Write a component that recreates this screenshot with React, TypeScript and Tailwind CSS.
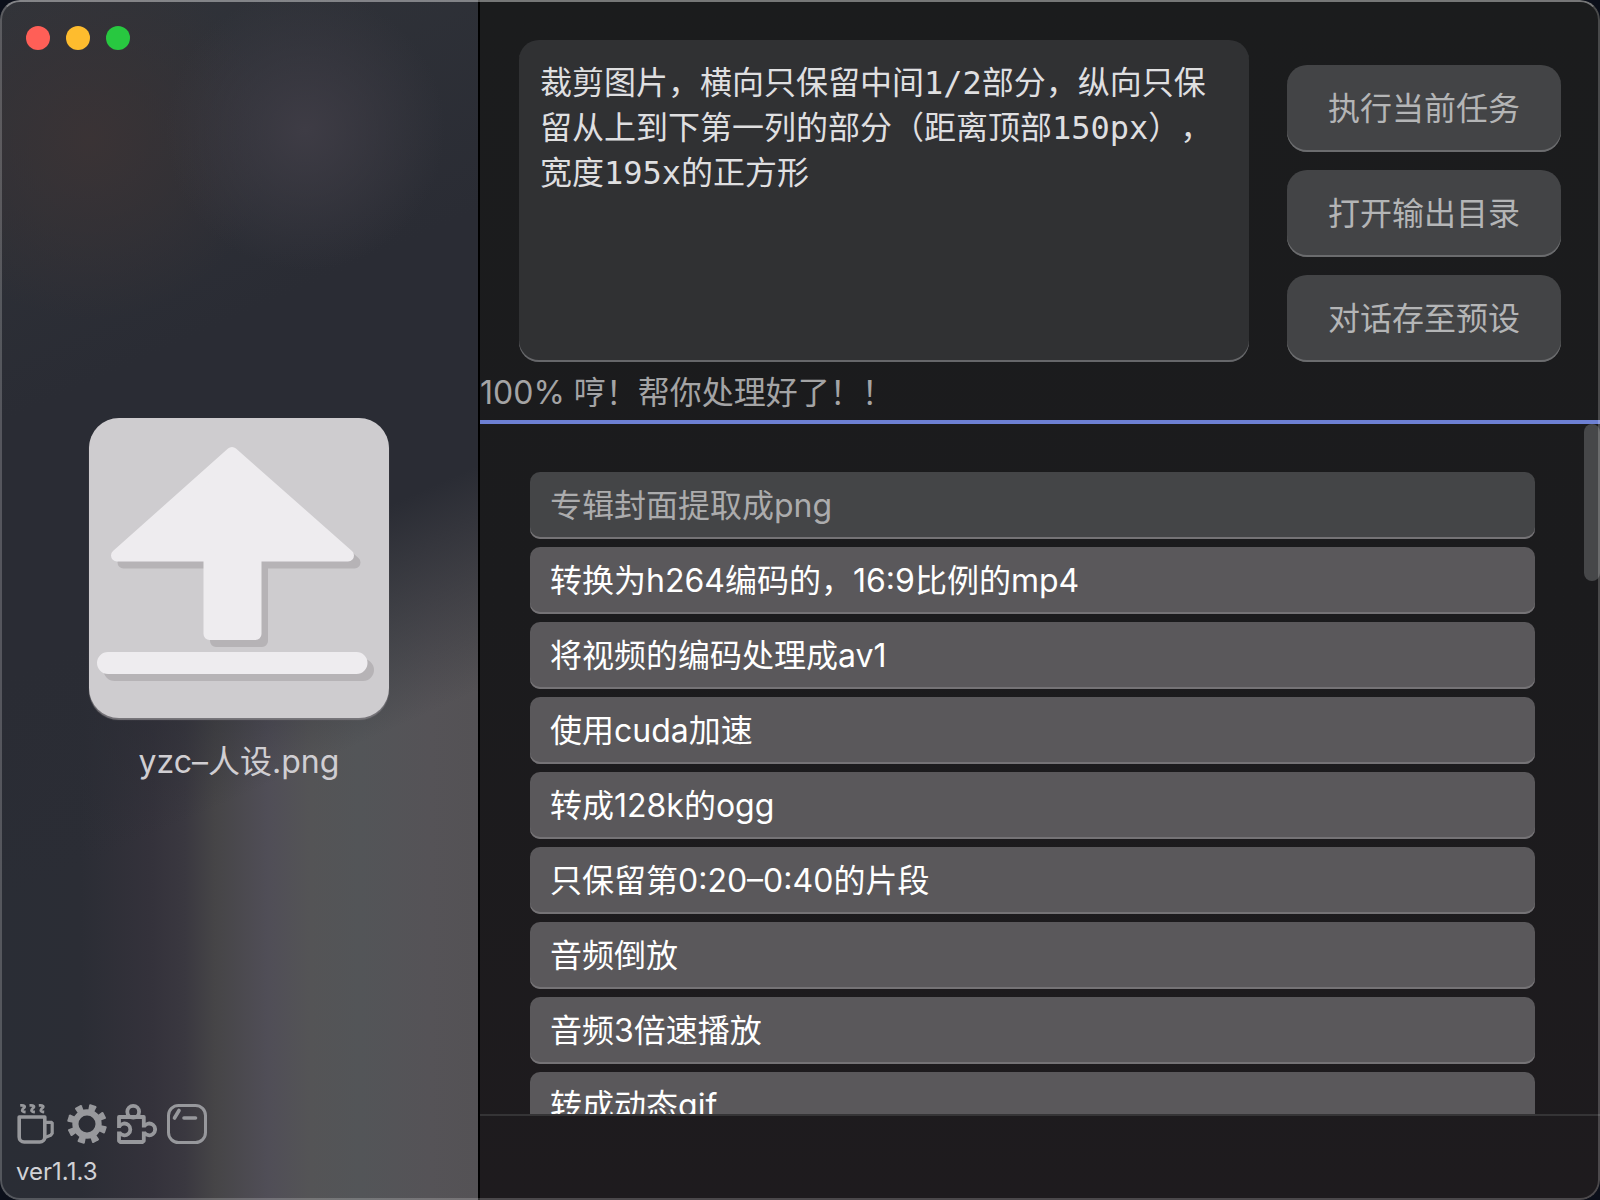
import { useState } from 'react';

const PRESETS = [
  '专辑封面提取成png',
  '转换为h264编码的，16:9比例的mp4',
  '将视频的编码处理成av1',
  '使用cuda加速',
  '转成128k的ogg',
  '只保留第0:20–0:40的片段',
  '音频倒放',
  '音频3倍速播放',
  '转成动态gif',
];

const ACTIONS = ['执行当前任务', '打开输出目录', '对话存至预设'];

const GEAR_ANGLES = [18, 63, 108, 153, 198, 243, 288, 333];

function UploadIcon() {
  return (
    <svg viewBox="0 0 300 300" className="size-full" aria-hidden="true">
      <g fill="#b6b3b6" stroke="#b6b3b6" strokeWidth="12" strokeLinejoin="round" transform="translate(6.5 7)">
        <path d="M143 35 259 137.5H166.500V216H120.500V137.500H28Z" />
        <rect x="14" y="240" width="258.500" height="10" rx="5" />
      </g>
      <g fill="#eeecef" stroke="#eeecef" strokeWidth="12" strokeLinejoin="round">
        <path d="M143 35 259 137.500H166.500V216H120.500V137.500H28Z" />
        <rect x="14" y="240" width="258.500" height="10" rx="5" />
      </g>
    </svg>
  );
}

function CupIcon() {
  return (
    <svg viewBox="0 0 40 40" className="size-10" fill="none" stroke="currentColor" strokeWidth="3.600" aria-hidden="true">
      <path d="M2.200 13H27.800V33a5 5 0 0 1-5 5H7.200a5 5 0 0 1-5-5Z" strokeLinejoin="round" />
      <path d="M28 18.300H34.300L35.200 19.200V29.300L33.800 31.200 28 33.600" strokeWidth="3.200" />
      <g strokeWidth="2.800">
        <path d="M3.200 1.400C7.600 1.200 8.600 2.400 6.800 4.100S3.800 7.600 8.600 8" />
        <path d="M12.500 1.400C16.900 1.200 17.900 2.400 16.100 4.100S13.100 7.600 17.900 8" />
        <path d="M21.800 1.400C26.200 1.200 27.200 2.400 25.400 4.100S22.400 7.600 27.200 8" />
      </g>
    </svg>
  );
}

function GearIcon() {
  return (
    <svg viewBox="0 0 40 40" className="size-10" fill="currentColor" aria-hidden="true">
      <circle cx="20" cy="20" r="11.600" fill="none" stroke="currentColor" strokeWidth="6.200" />
      {GEAR_ANGLES.map(a => (
        <path key={a} d="M17 7.500 16.200 1.200Q16.200.3 17.200.2H22.800Q23.800.3 23.800 1.200L23 7.500Z" transform={`rotate(${a} 20 20)`} />
      ))}
    </svg>
  );
}

function PuzzleIcon() {
  return (
    <svg viewBox="0 0 40 40" className="size-10" fill="none" stroke="currentColor" strokeWidth="3.800" aria-hidden="true">
      <path d="M2 24V13H26.800V23.500M26.800 27.500V36.800L25.600 38H3.200L2 36.800V27.500" strokeLinejoin="round" />
      <circle cx="16.200" cy="7.800" r="5.900" />
      <path d="M27.200 22.300A5.900 5.900 0 1 1 27.200 28.500" />
      <path d="M2.400 22.300A5.900 5.900 0 1 1 2.400 28.500" />
    </svg>
  );
}

function WindowIcon() {
  return (
    <svg viewBox="0 0 40 40" className="size-10" fill="none" stroke="currentColor" strokeLinecap="round" aria-hidden="true">
      <rect x="1.500" y="1.500" width="37" height="37" rx="10" strokeWidth="3" />
      <path d="M12 6.500 7.500 14" strokeWidth="3.600" />
      <path d="M17 14H28.500" strokeWidth="3.600" />
    </svg>
  );
}

const TOOLS = [
  { label: '赞助', Icon: CupIcon },
  { label: '设置', Icon: GearIcon },
  { label: '插件', Icon: PuzzleIcon },
  { label: '窗口', Icon: WindowIcon },
];

function Sidebar() {
  return (
    <aside className="flex w-[480px] shrink-0 flex-col border-r-2 border-black bg-[radial-gradient(circle_at_305px_130px,#3e3c45_0,#3e3c4500_140px),radial-gradient(circle_at_90px_140px,#3a3335_0,#3a333500_180px),linear-gradient(156deg,#31343a_0%,#2a2c34_30%,#2a2c34_48%,#2a2c3400_64%),linear-gradient(90deg,#2a2d35_0,#2b2d35_80px,#34323b_150px,#3a3840_185px,#464547_215px,#504e57_268px,#545456_310px,#535558_360px,#555357_430px,#545255_478px)]">
      <div className="flex gap-4 px-[26px] pt-[26px]">
        <button aria-label="关闭" className="size-6 rounded-full bg-[#ff5f57]" />
        <button aria-label="最小化" className="size-6 rounded-full bg-[#febc2e]" />
        <button aria-label="缩放" className="size-6 rounded-full bg-[#28c840]" />
      </div>

      <div className="flex flex-1 flex-col items-center justify-center gap-5 pt-[50px]">
        <button aria-label="选择文件" className="size-[300px] overflow-hidden rounded-[30px] bg-[#cecccf] shadow-[0_2px_1px_#77757a]">
          <UploadIcon />
        </button>
        <p className="text-[32px] leading-[48px] text-[#d0ced2]">yzc–人设.png</p>
      </div>

      <div className="px-4 pb-3">
        <div className="flex gap-[10px] pl-px text-[#97989c]">
          {TOOLS.map(({ label, Icon }) => (
            <button key={label} aria-label={label}><Icon /></button>
          ))}
        </div>
        <p className="mt-3 text-2xl leading-8 text-[#d2d2d6]">ver1.1.3</p>
      </div>
    </aside>
  );
}

export default function App() {
  const [prompt, setPrompt] = useState(
    '裁剪图片，横向只保留中间1/2部分，纵向只保留从上到下第一列的部分（距离顶部150px），宽度195x的正方形',
  );

  return (
    <div className="h-screen bg-[#0b0f1a] font-['Inter','Noto_Sans_CJK_SC',sans-serif]">
      <div className="relative flex h-full overflow-hidden rounded-[20px]">
        <Sidebar />

        <main className="flex min-w-0 flex-1 flex-col bg-linear-to-b from-[#1b1c1d] via-[#1b1b1d] to-[#1e1b1e]">
          <div className="flex items-end gap-[38px] px-[39px] pt-10">
            <textarea
              aria-label="任务描述"
              value={prompt}
              onChange={e => setPrompt(e.target.value)}
              className="h-[322px] min-w-0 flex-1 resize-none rounded-[20px] bg-[#303133] px-[21px] pt-[21px] font-['DejaVu_Sans_Mono','Noto_Sans_CJK_SC',monospace] text-[32px] leading-[45px] text-[#dfdfe0] shadow-[inset_0_-2px_0_#66676a] outline-none [text-spacing-trim:space-all]"
            />
            <div className="flex flex-col gap-[18px]">
              {ACTIONS.map(label => (
                <button key={label} className="h-[87px] rounded-[20px] bg-[#434446] px-[41px] text-[32px] text-[#b4b5b6] shadow-[inset_0_-2px_0_#6b6c6e]">
                  {label}
                </button>
              ))}
            </div>
          </div>

          <p className="h-[58px] text-[32px] leading-[62px] text-[#a4a4a5]">100% 哼！帮你处理好了！！</p>
          <div role="progressbar" aria-valuenow={100} aria-label="进度" className="h-1 w-full shrink-0 bg-[#6d80d3]" />

          <div className="relative min-h-0 flex-1 overflow-hidden border-b-2 border-[#353436]">
            <ul className="flex flex-col gap-2 pt-12 pr-[65px] pl-[50px]">
              {PRESETS.map(preset => (
                <li key={preset}>
                  <button
                    disabled={preset === PRESETS[0]}
                    onClick={() => setPrompt(preset)}
                    className="block h-[67px] w-full rounded-[10px] bg-[#5a585b] px-5 text-left text-[32px] text-white shadow-[inset_0_-2px_0_#757376] disabled:bg-[#444547] disabled:text-[#acacad]"
                  >
                    {preset}
                  </button>
                </li>
              ))}
            </ul>
            <div className="absolute top-0 right-0 h-[157px] w-4 rounded-full bg-[#464749]" />
          </div>
          <footer className="h-[84px] shrink-0" />
        </main>

        <div className="pointer-events-none absolute inset-0 rounded-[20px] border-2 border-white/20 border-t-white/40" />
      </div>
    </div>
  );
}
